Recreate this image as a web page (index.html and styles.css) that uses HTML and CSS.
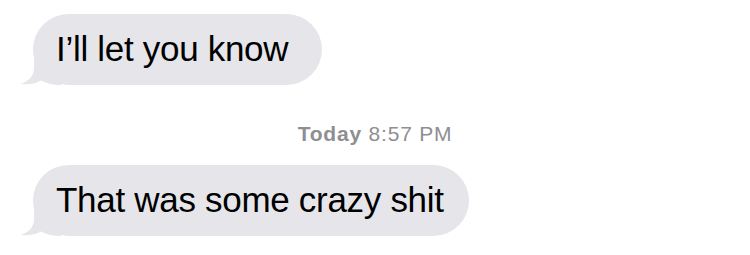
FILE: index.html
```html
<!DOCTYPE html>
<html>
<head>
<meta charset="utf-8">
<link rel="stylesheet" href="styles.css">
</head>
<body>
<div class="thread">
  <div class="row">
    <div class="bubble b1"><svg class="tail" width="40" height="30" viewBox="0 0 40 30" aria-hidden="true"><path d="M13 0 L13 13 C13 21 8 26 0 29 C8 30 15 28.5 20 25.5 C26 28.5 32 30 40 30 L40 0 Z"/></svg><span class="txt">I’ll let you know</span></div>
  </div>
  <div class="stamp"><b>Today</b> 8:57 PM</div>
  <div class="row">
    <div class="bubble b2"><svg class="tail" width="40" height="30" viewBox="0 0 40 30" aria-hidden="true"><path d="M13 0 L13 13 C13 21 8 26 0 29 C8 30 15 28.5 20 25.5 C26 28.5 32 30 40 30 L40 0 Z"/></svg><span class="txt">That was some crazy shit</span></div>
  </div>
</div>
</body>
</html>
```
FILE: styles.css
```css
html, body { margin: 0; padding: 0; background: #fff; }
body { width: 750px; height: 255px; overflow: hidden; font-family: "Liberation Sans", Arial, sans-serif; }
.thread { display: flex; flex-direction: column; padding-top: 14px; }
.row { display: flex; padding-left: 33px; }
.bubble {
  position: relative;
  display: flex;
  align-items: center;
  height: 71px;
  box-sizing: border-box;
  padding: 0 34px 0 23px;
  background: #e5e5ea;
  border-radius: 36px;
  color: #000;
  font-size: 35px;
  letter-spacing: -0.3px;
  white-space: nowrap;
}
.b2 { padding-right: 25px; }
.txt { position: relative; top: -1px; }
.tail {
  position: absolute;
  left: -12px;
  bottom: 0;
  fill: #e5e5ea;
}
.stamp {
  text-align: center;
  color: #8e8e93;
  font-size: 21px;
  letter-spacing: 0.8px;
  margin: 38px 0 20px;
  line-height: 22px;
}
.stamp b { font-weight: 700; }
```
